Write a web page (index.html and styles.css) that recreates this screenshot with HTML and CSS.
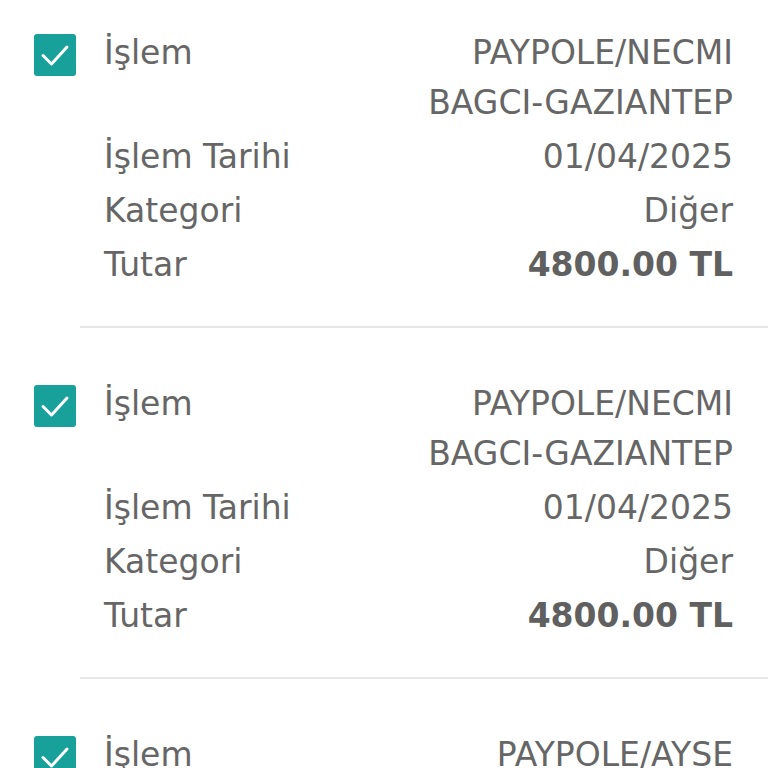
FILE: index.html
```html
<!DOCTYPE html>
<html lang="tr">
<head>
    <meta charset="UTF-8">
    <meta name="viewport" content="width=device-width, initial-scale=1.0">
    <title>İşlemler</title>
    <link rel="stylesheet" href="styles.css">
</head>
<body>
    <div class="list">
        <div class="item">
            <span class="check">
                <svg viewBox="0 0 42 42" width="42" height="42"><path d="M9 21.5l8.5 8.5L33 13" fill="none" stroke="#fff" stroke-width="3" stroke-linecap="round" stroke-linejoin="round"/></svg>
            </span>
            <div class="fields">
                <span class="label">İşlem</span><span class="value">PAYPOLE/NECMI BAGCI-GAZIANTEP</span>
                <span class="label">İşlem Tarihi</span><span class="value">01/04/2025</span>
                <span class="label">Kategori</span><span class="value">Diğer</span>
                <span class="label">Tutar</span><span class="value amount">4800.00 TL</span>
            </div>
        </div>
        <hr class="divider">

        <div class="item">
            <span class="check">
                <svg viewBox="0 0 42 42" width="42" height="42"><path d="M9 21.5l8.5 8.5L33 13" fill="none" stroke="#fff" stroke-width="3" stroke-linecap="round" stroke-linejoin="round"/></svg>
            </span>
            <div class="fields">
                <span class="label">İşlem</span><span class="value">PAYPOLE/NECMI BAGCI-GAZIANTEP</span>
                <span class="label">İşlem Tarihi</span><span class="value">01/04/2025</span>
                <span class="label">Kategori</span><span class="value">Diğer</span>
                <span class="label">Tutar</span><span class="value amount">4800.00 TL</span>
            </div>
        </div>
        <hr class="divider">

        <div class="item">
            <span class="check">
                <svg viewBox="0 0 42 42" width="42" height="42"><path d="M9 21.5l8.5 8.5L33 13" fill="none" stroke="#fff" stroke-width="3" stroke-linecap="round" stroke-linejoin="round"/></svg>
            </span>
            <div class="fields">
                <span class="label">İşlem</span><span class="value">PAYPOLE/AYSE KARAKAYA-GAZIANTEP</span>
                <span class="label">İşlem Tarihi</span><span class="value">01/04/2025</span>
                <span class="label">Kategori</span><span class="value">Diğer</span>
                <span class="label">Tutar</span><span class="value amount">1250.00 TL</span>
            </div>
        </div>
    </div>
</body>
</html>
```

FILE: styles.css
```css
html, body {
    margin: 0;
    padding: 0;
}
body {
    font-family: "DejaVu Sans", sans-serif;
    background: #fff;
    color: #666;
    overflow: hidden;
}
.list {
    margin-top: -23px;
}
.item {
    display: flex;
    align-items: flex-start;
    padding: 51px 35px 36px 34px;
}
.check {
    flex: none;
    width: 42px;
    height: 42px;
    margin-top: 6px;
    margin-right: 28px;
    background-color: #17a19a;
    border-radius: 3px;
}
.check svg {
    display: block;
}
.fields {
    flex: 1;
    display: grid;
    grid-template-columns: auto 1fr;
    column-gap: 56px;
    row-gap: 4px;
    font-size: 33px;
    line-height: 50px;
}
.value {
    text-align: right;
}
.amount {
    font-weight: 700;
    color: #606060;
}
.divider {
    margin: 0 0 0 80px;
    border: none;
    border-top: 2px solid #e6e6e6;
}
```
